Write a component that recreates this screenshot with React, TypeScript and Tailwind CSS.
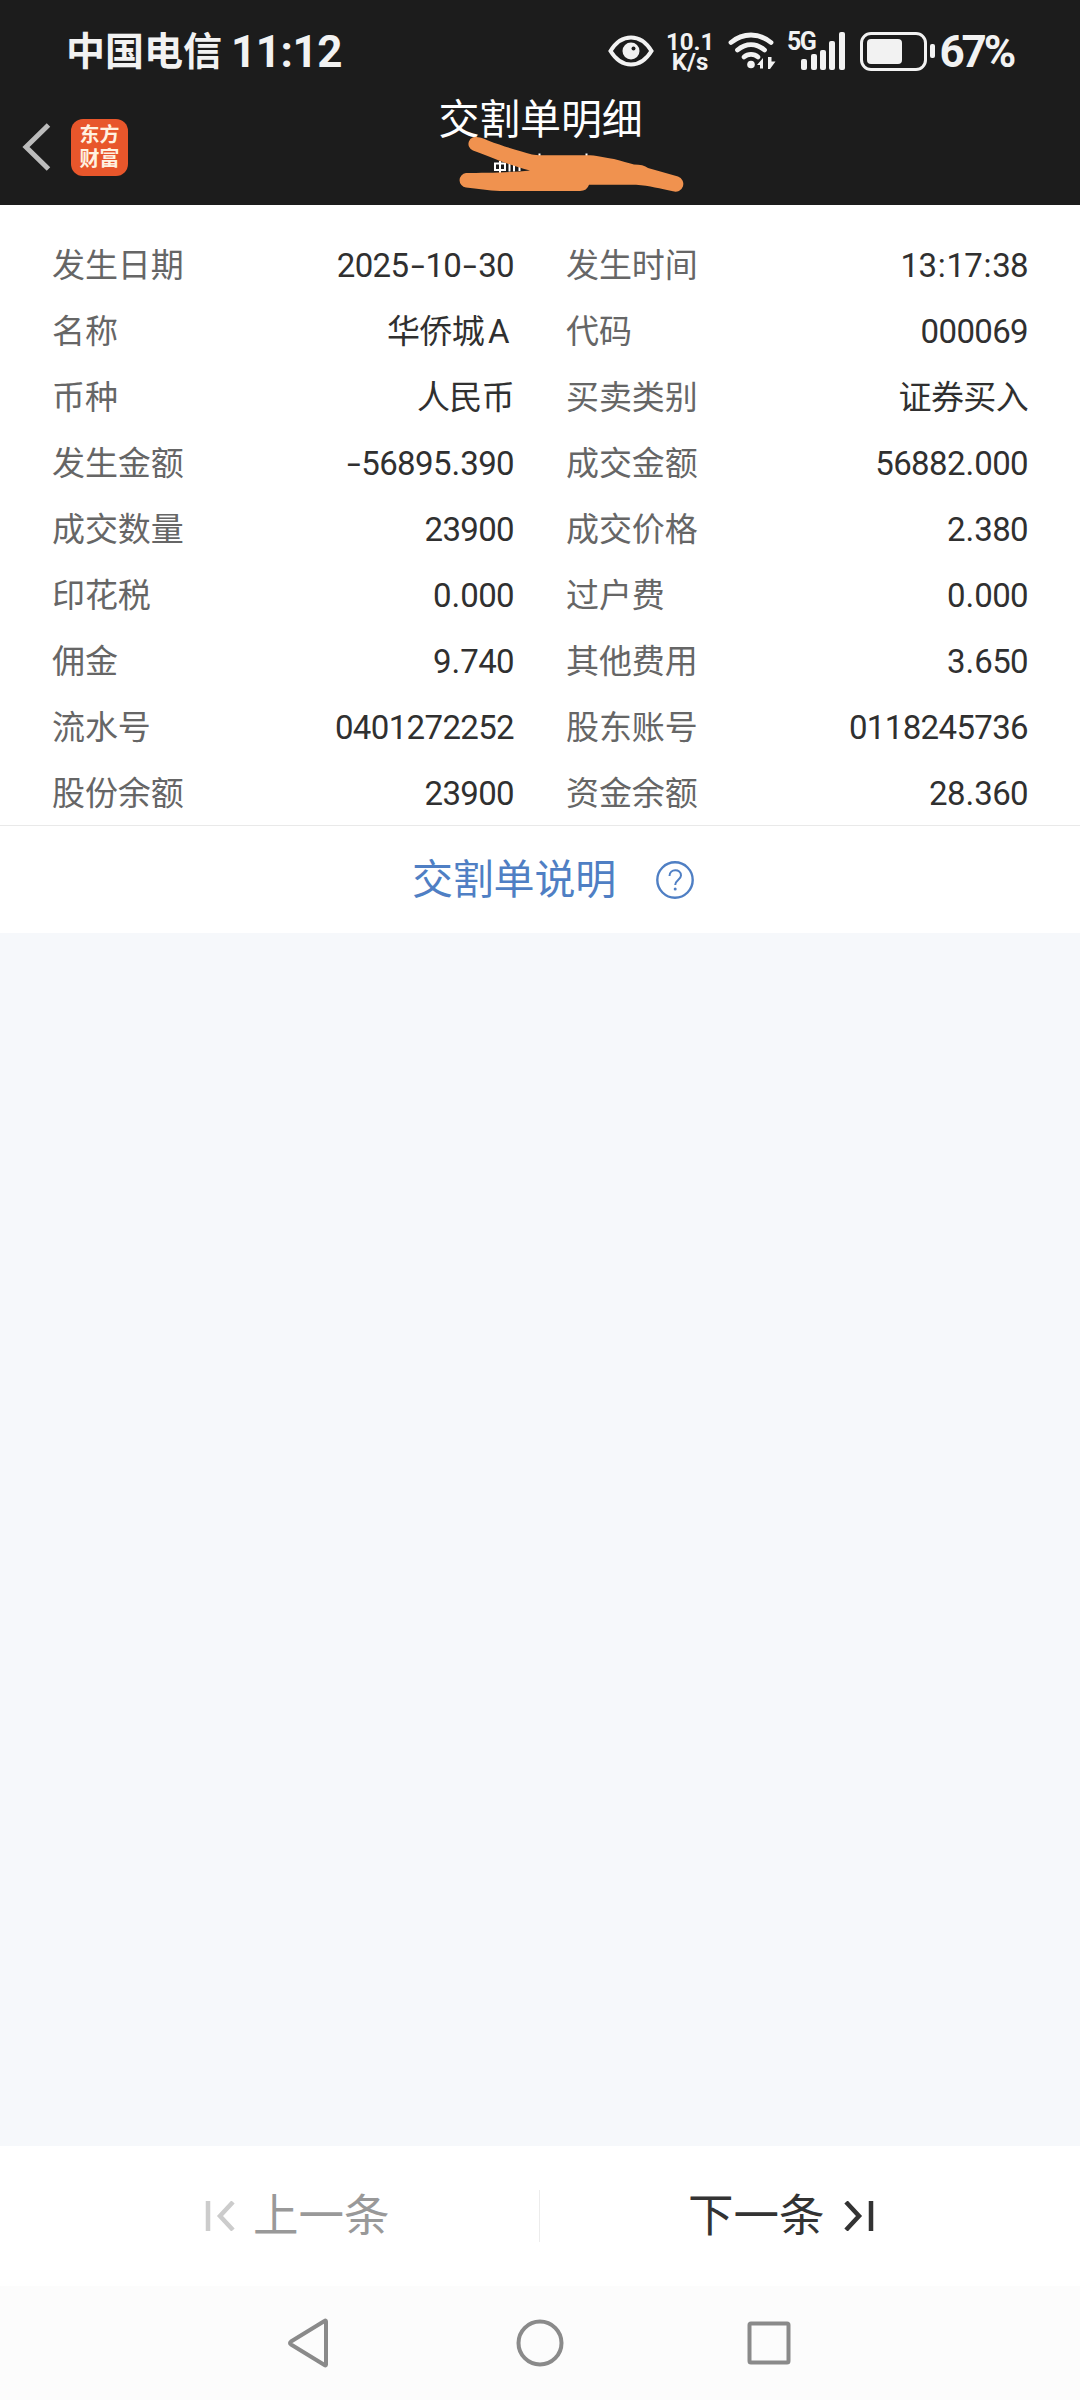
import type { ReactNode } from "react";

const rows = [
  ["发生日期", "2025-10-30", "发生时间", "13:17:38"],
  ["名称", "华侨城A", "代码", "000069"],
  ["币种", "人民币", "买卖类别", "证券买入"],
  ["发生金额", "-56895.390", "成交金额", "56882.000"],
  ["成交数量", "23900", "成交价格", "2.380"],
  ["印花税", "0.000", "过户费", "0.000"],
  ["佣金", "9.740", "其他费用", "3.650"],
  ["流水号", "0401272252", "股东账号", "0118245736"],
  ["股份余额", "23900", "资金余额", "28.360"],
];

function Value({ text }: { text: string }) {
  const parts: ReactNode[] = text.split("").map((ch, i) => {
    if (ch === "-") {
      return (
        <span key={i} className="inline-block w-[17px] text-center">
          <span className="inline-block scale-x-150">-</span>
        </span>
      );
    }
    if (ch === ":") {
      return (
        <span key={i} className="inline-block w-[10px] text-center">
          :
        </span>
      );
    }
    if (ch === ".") {
      return (
        <span key={i} className="inline-block w-[9.5px] text-center">
          .
        </span>
      );
    }
    if (ch === "A") {
      return (
        <span key={i} className="mr-[5px] ml-1">
          A
        </span>
      );
    }
    return ch;
  });
  return (
    <span className="text-[33px] tracking-[-0.65px] text-[#303030]">
      {parts}
    </span>
  );
}

function Field({ label, value }: { label: string; value: string }) {
  return (
    <div className="flex h-[66px] items-center justify-between pt-[3px]">
      <span className="text-[33px] tracking-[-0.1px] text-[#666]">{label}</span>
      <Value text={value} />
    </div>
  );
}

function StatusBar() {
  return (
    <div className="flex h-[102px] items-center pr-[67px] pl-[66px] text-[#f2f2f2]">
      <span className="pt-[3px] text-[39px] font-bold">中国电信</span>
      <span className="ml-[9px] pt-[2px] text-[44px] leading-none font-bold tracking-[-0.5px]">
        11:12
      </span>
      <div className="ml-auto flex items-center">
        <svg width="46" height="32" viewBox="0 0 46 32" fill="none">
          <path
            d="M2.5 16C8 7 15 2.5 23 2.5S38 7 43.5 16C38 25 31 29.5 23 29.5S8 25 2.5 16Z"
            stroke="#f2f2f2"
            strokeWidth="4"
          />
          <circle cx="23" cy="16" r="8.5" fill="#f2f2f2" />
          <circle cx="25.5" cy="13.5" r="2" fill="#1c1c1c" />
        </svg>
        <div className="ml-3 flex w-[48px] flex-col gap-px pt-[2px] text-center text-[24px] leading-[19px] font-bold">
          <span>10.1</span>
          <span>K/s</span>
        </div>
        <svg
          className="ml-[14px]"
          width="48"
          height="38"
          viewBox="0 0 48 38"
          fill="none"
          stroke="#f2f2f2"
          strokeWidth="4.8"
          strokeLinecap="round"
        >
          <path d="M3 10.5C15 0.5 31 0.5 43 10.5" />
          <path d="M9.5 18C18 11 28 11 36.5 18" />
          <path d="M16 25C20 21.5 26 21.5 30 25" />
          <circle cx="23" cy="32.5" r="3.8" fill="#f2f2f2" stroke="none" />
          <path
            d="M29 33L35 26V36.500H32V33ZM40 25V37H42L47.500 29.500H43.500V25Z"
            fill="#f2f2f2"
            stroke="none"
          />
        </svg>
        <div className="ml-[11px] flex h-[38px] items-end">
          <span className="mr-[-14px] self-start text-[25px] leading-[19px] font-bold tracking-[-1.5px]">
            5G
          </span>
          <div className="flex items-end gap-[3.3px]">
            <span className="h-[11px] w-[6px] rounded-[2px] bg-[#f2f2f2]" />
            <span className="h-[16px] w-[6px] rounded-[2px] bg-[#f2f2f2]" />
            <span className="h-[20px] w-[6px] rounded-[2px] bg-[#f2f2f2]" />
            <span className="h-[29px] w-[6px] rounded-[2px] bg-[#f2f2f2]" />
            <span className="h-[38px] w-[6px] rounded-[2px] bg-[#f2f2f2]" />
          </div>
        </div>
        <div className="ml-[15px] h-[39px] w-[67px] rounded-[11px] border-[3px] border-[#f2f2f2] p-1">
          <div className="h-[25px] w-[35px] rounded-[4px] bg-[#f2f2f2]" />
        </div>
        <span className="ml-[3px] h-[14px] w-[5px] rounded-[2px] bg-[#f2f2f2]" />
        <span className="ml-[5px] pt-[2px] text-[44px] leading-none font-bold tracking-[-3.2px]">
          67%
        </span>
      </div>
    </div>
  );
}

// orange marker drawn over the account name
function Scribble() {
  return (
    <svg
      className="absolute top-[34px] left-[458px]"
      width="228"
      height="58"
      viewBox="458 136 228 58"
      fill="none"
    >
      <path
        d="M495 163.500H505V170H495ZM500 161V173M509.500 162V171.500M514 163V171.500M519.500 167V171M539.500 153.500V156M586.500 153.500V156"
        stroke="#fff"
        strokeWidth="2"
      />
      <path
        d="M478 137.300C480 137.300 483 138.500 488 140.500C505 147 520 151 532 154.500Q536 155.500 545 155.300H590C600 156 605 158 614 159C622 161 628 163 634 164.500C640 164.500 645 165.500 648 168L678 176.500A7.600 7.600 0 0 1 673 191.300C660 189 650 185.500 636 184.800H589Q587 191 580 191H500C488 190.500 478 188.500 466 187.500A7.300 7.300 0 0 1 466 173C485 173 512 172.500 530 170.500C508 165 490 156.500 473 150.500A7 7 0 0 1 478 137.300Z"
        fill="#f0924f"
      />
    </svg>
  );
}

function Header() {
  return (
    <header className="relative flex h-[103px] items-start">
      <div className="flex h-[90px] w-[400px] items-center pl-[22px]">
        <svg width="30" height="48" viewBox="0 0 30 48" fill="none">
          <path d="M26.5 2L4 24L26.5 46" stroke="#bcbcbc" strokeWidth="5" />
        </svg>
        <div className="ml-[19px] flex h-[57px] w-[57px] flex-col items-center justify-center rounded-[12px] bg-[#e8562b] text-[20px] leading-[24px] font-bold text-[#fff1e0]">
          <span>东方</span>
          <span>财富</span>
        </div>
      </div>
      <h1 className="-mt-[12px] w-[281px] text-center text-[41px] leading-[60px] tracking-[-0.2px] text-white">
        交割单明细
      </h1>
      <Scribble />
    </header>
  );
}

function Pager() {
  return (
    <div className="flex h-[140px] items-center bg-white text-[45.5px]">
      <button className="flex w-[539px] items-center pl-[205px] text-[#999]">
        <svg width="30" height="30" viewBox="0 0 30 30" fill="none">
          <path d="M3 0V30M28 1L15 15L28 29" stroke="#ccc" strokeWidth="4.5" />
        </svg>
        <span className="ml-[18px] pt-[3px]">上一条</span>
      </button>
      <div className="h-[52px] w-px bg-[#ececec]" />
      <button className="flex w-[540px] items-center pl-[148px] text-[#333]">
        <span className="pt-[3px]">下一条</span>
        <svg
          className="ml-[19px]"
          width="30"
          height="30"
          viewBox="0 0 30 30"
          fill="none"
        >
          <path d="M27 0V30M2 1L15 15L2 29" stroke="#333" strokeWidth="4.5" />
        </svg>
      </button>
    </div>
  );
}

function NavBar() {
  return (
    <nav className="flex h-[114px] items-center bg-[#fcfcfc] pl-[284px]">
      <svg
        width="510"
        height="52"
        viewBox="0 0 510 52"
        fill="none"
        stroke="#8a8a8a"
        strokeWidth="4"
        strokeLinejoin="round"
      >
        <path d="M42 4.500V47.500Q42 49 40.500 48L7 27.500Q5 26 7 24.500L40.500 4Q42 3 42 4.500Z" />
        <circle cx="256" cy="26" r="21.5" />
        <rect x="465.5" y="6.5" width="39" height="39" rx="1.5" />
      </svg>
    </nav>
  );
}

export default function App() {
  return (
    <div className="flex h-[2400px] w-[1080px] flex-col overflow-hidden bg-[#f6f8fb] font-[Roboto,'Noto_Sans_CJK_SC',sans-serif]">
      <div className="h-[205px] bg-[#1c1c1c]">
        <StatusBar />
        <Header />
      </div>

      <div className="border-b border-[#e9e9e9] bg-white px-[52px] pt-[26px]">
        {rows.map(([l1, v1, l2, v2]) => (
          <div key={l1} className="grid grid-cols-2 gap-[52px]">
            <Field label={l1} value={v1} />
            <Field label={l2} value={v2} />
          </div>
        ))}
      </div>

      <div className="flex h-[107px] items-center bg-white pl-[412px]">
        <span className="pt-[3px] text-[41px] tracking-[-0.2px] text-[#4f7fc4]">
          交割单说明
        </span>
        <svg
          className="ml-[40px]"
          width="38"
          height="38"
          viewBox="0 0 38 38"
          fill="none"
          stroke="#4f7fc4"
        >
          <circle cx="19" cy="19" r="17.7" strokeWidth="2.4" />
          <path
            d="M13.5 15C13.5 7.5 25 7.5 25 14.5C25 18.5 19.2 19 19.2 24"
            strokeWidth="2"
          />
          <circle cx="19.2" cy="28" r="1.5" fill="#4f7fc4" stroke="none" />
        </svg>
      </div>

      <div className="flex-1" />
      <Pager />
      <NavBar />
    </div>
  );
}
